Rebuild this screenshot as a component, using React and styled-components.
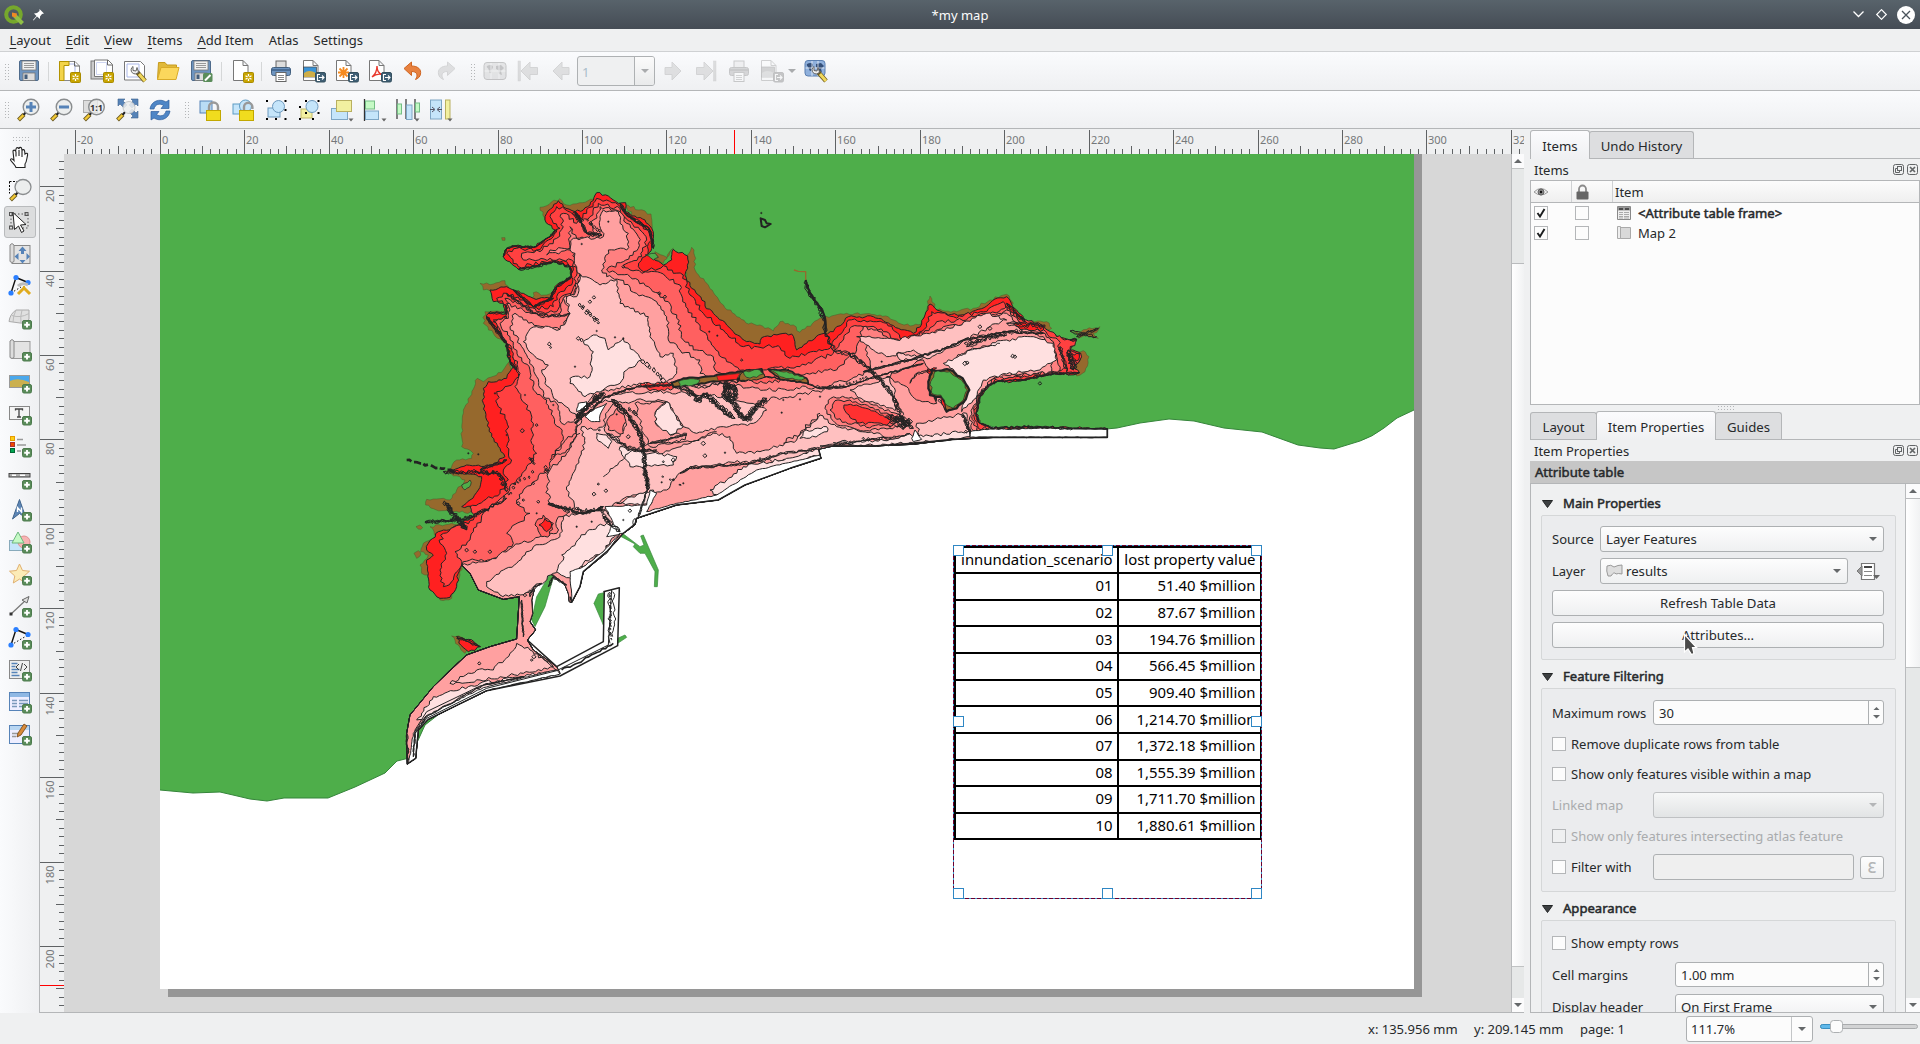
import React from "react";
import styled, { createGlobalStyle, css } from "styled-components";

const Global = createGlobalStyle`
  * { box-sizing: border-box; }
  body { margin: 0; overflow: hidden; background: #eff0f1; }
  svg { display: block; }
`;

/* ---------- window frame ---------- */
const Window = styled.div`
  width: 1920px; height: 1044px; display: flex; flex-direction: column; overflow: hidden;
  background: #eff0f1; color: #26292b; font: 13px/18px "Noto Sans", sans-serif; cursor: default;
`;
const TitleBar = styled.header`
  height: 29px; flex: none; display: grid; grid-template-columns: 1fr auto 1fr; align-items: center;
  background: linear-gradient(#58636b, #454c55); color: #fcfcfc;
`;
const TitleSide = styled.div`
  display: flex; align-items: center; gap: ${p => p.$gap}px; padding: 0 ${p => p.$pad}px;
  justify-content: ${p => (p.$end ? "flex-end" : "flex-start")};
`;
const MenuBar = styled.nav`
  height: 23px; flex: none; display: flex; align-items: center; padding-left: 9.5px; gap: 15px;
  border-bottom: 1px solid #cfd1d3;
`;
const MenuItem = styled.span`u { text-underline-offset: 3px; text-decoration-thickness: 1px; }`;
const ToolBar = styled.div`
  height: ${p => p.$h}px; flex: none; display: flex; align-items: center; padding-left: 4px;
  border-bottom: 1px solid #b4b6b8; background: linear-gradient(#fafbfd, #eff0f2);
`;
const Tool = styled.span`
  width: 33px; height: 30px; flex: none; display: grid; place-items: center; opacity: ${p => (p.$off ? 0.3 : 1)};
  filter: ${p => (p.$off ? "grayscale(1)" : "none")};
`;
const Sep = styled.span`width: 1px; height: 19px; background: #d5d7d8; margin: 0 ${p => p.$r ?? 3}px 0 ${p => p.$l ?? 3}px;`;
const Grip = styled.span`
  width: ${p => (p.$across ? 17 : 5)}px; height: ${p => (p.$across ? 5 : 17)}px; margin: ${p => p.$m || 0};
  flex: none; background: radial-gradient(circle, #b4b6b8 0.8px, transparent 1px) 0 0 / 3px 3px;
`;
const AtlasBox = styled.div`
  width: 78px; height: 30px; margin: 0 1px 0 0; display: flex; border: 1px solid #aeb1b3; border-radius: 3px;
  color: #a9bccb; background: #eff0f1; overflow: hidden; align-items: stretch;
`;
const AtlasValue = styled.span`flex: 1; padding: 6px 4px; border-right: 1px solid #aeb1b3;`;
const AtlasArrow = styled.span`width: 19px; display: grid; place-items: center; background: linear-gradient(#fbfbfb, #e9eaeb);`;
const ArrowSlot = styled.span`width: 11px; flex: none;`;
const Main = styled.main`height: 884px; flex: none; display: flex;`;
const SideBar = styled.aside`
  width: 40px; flex: none; border-right: 1px solid #b4b6b8; display: flex; flex-direction: column; align-items: center;
  background: linear-gradient(90deg, #fafbfd, #eff0f2); padding: 7px 0 0 1px;
`;
const SideTool = styled.span`
  width: 32px; height: 32px; display: grid; place-items: center; border-radius: 3px; border: 1px solid transparent; flex: none;
  ${p => p.$on && css`background: #dcddde; border-color: #b9bbbd;`}
`;
const Canvas = styled.section`width: 1484px; flex: none; display: flex; flex-direction: column; border-bottom: 1px solid #b4b6b8;`;
const CanvasRow = styled.div`display: flex; height: 858px;`;
const View = styled.div`position: relative; width: 1447px; height: 858px; background: #d7d7d7; overflow: hidden;`;

/* ---------- attribute table on the page ---------- */
const Frame = styled.div`
  position: absolute; left: 889.5px; top: 391.5px; width: 308px; border: 2px solid #000; border-bottom: 0;
  font: 14.9px/20px "Noto Sans", sans-serif; color: #000;
`;
const FrameRow = styled.div`
  display: grid; grid-template-columns: 163px 1fr; height: 26.64px; border-bottom: 2px solid #000;
`;
const FrameCell = styled.span`
  display: flex; justify-content: flex-end; align-items: center; padding: 0 4px 2px 0; white-space: nowrap; overflow: hidden;
  border-right: ${p => (p.$last ? 0 : 2)}px solid #000;
`;
const Overlay = styled.svg`position: absolute; left: 0; top: 0;`;

/* ---------- scrollbars ---------- */
const Bar = styled.div`width: ${p => p.$w}px; flex: none; display: flex; flex-direction: column; border-left: 1px solid #b9bbbd;`;
const BarEnd = styled.span`height: 14px; flex: none; display: grid; place-items: center; background: #fbfbfc;`;
const Track = styled.span`height: ${p => p.$h}px; background: #e6e8e8; border: solid #c0c2c3; border-width: 1px 0 0;`;
const Thumb = styled.span`flex: ${p => (p.$h ? "none" : 1)}; height: ${p => p.$h}px; background: linear-gradient(90deg, #fff, #f1f2f3); border-top: 1px solid #b9bbbd;`;

/* ---------- docks ---------- */
const Splitter = styled.div`width: 6px; flex: none; padding: 436px 0 0 2px;`;
const Dock = styled.aside`width: 390px; flex: none; display: flex; flex-direction: column; border-bottom: 1px solid #b4b6b8; overflow: hidden;`;
const Tabs = styled.div`
  height: 30px; flex: none; display: flex; align-items: flex-end; border-bottom: 1px solid #b4b6b8;
`;
const Tab = styled.span`
  width: ${p => p.$w}px; height: ${p => (p.$on ? 29 : 27)}px; margin-bottom: ${p => (p.$on ? -1 : 0)}px; text-align: center;
  padding-top: ${p => (p.$on ? 6 : 5)}px; border: 1px solid #b4b6b8; border-bottom: 0; border-radius: 3px 3px 0 0;
  margin-left: ${p => (p.$join ? -1 : 0)}px; font-size: 13.2px;
  background: ${p => (p.$on ? "linear-gradient(#fbfbfd,#eff0f2)" : "#dddee0")};
`;
const DockTitle = styled.div`height: ${p => p.$h}px; flex: none; display: flex; align-items: center; padding: 0 2px 0 4px; gap: 3px;`;
const Grow = styled.span`flex: 1;`;
const Tree = styled.div`height: 225px; flex: none; border: 1px solid #b4b6b8; background: #fcfcfc;`;
const TreeHead = styled.div`
  display: grid; grid-template-columns: 41px 41px 1fr; height: 22px; border-bottom: 1px solid #b4b6b8;
  background: linear-gradient(#fcfcfc, #efefef);
`;
const HeadCell = styled.span`padding-left: ${p => p.$p ?? 2}px; display: flex; align-items: center; border-right: ${p => (p.$last ? 0 : 1)}px solid #cfd1d3;`;
const TreeRow = styled.div`display: grid; grid-template-columns: 41px 42px 21px 1fr; height: 20px; align-items: center; padding: 0 0 1px 3px;`;
const Strong = styled.span`-webkit-text-stroke: 0.5px #26292b; font-size: 13.1px; padding-bottom: ${p => p.$pb || 0}px;`;
const Check = styled.span`
  width: 14px; height: 14px; flex: none; border: 1px solid #b4b6b8; display: grid; place-items: center;
  background: ${p => (p.$off ? "#eff0f1" : "#fcfcfc")};
`;
const HandleRow = styled.div`height: 5px; flex: none; display: flex; justify-content: center;`;
const Heading = styled.div`height: 22px; flex: none; background: #c6c6c6; padding: 2px 5px;`;
const Scroll = styled.div`flex: 1; min-height: 0; display: flex; border-top: 1px solid #b4b6b8; border-left: 1px solid #b4b6b8;`;
const Form = styled.div`width: 374px; flex: none; padding: 0 9px 0 10px; overflow: hidden;`;
const SectionTitle = styled.div`height: 22px; margin-top: ${p => p.$mt}px; display: flex; align-items: center; gap: 10px; padding-left: 1px;`;
const Group = styled.div`
  border: 1px solid #d5d7d8; border-radius: 2px; background: #ebecee; padding: ${p => p.$pt}px 11px 11px 10px; height: ${p => p.$h}px;
`;
const Line = styled.div`
  display: flex; align-items: center; height: ${p => p.$h || 26}px; margin-top: ${p => p.$mt || 0}px; gap: ${p => p.$gap || 0}px;
  color: ${p => (p.$off ? "#a9abad" : "inherit")};
`;
const Label = styled.span`width: ${p => p.$w}px; flex: none;`;
const face = css`border: 1px solid #adb0b2; border-radius: 3px; background: linear-gradient(#fdfdfd, #eff0f1);`;
const Combo = styled.span`
  ${face} height: 26px; width: ${p => (p.$w ? p.$w + "px" : "auto")}; flex: ${p => (p.$w ? "none" : 1)};
  display: flex; align-items: center; gap: 3px; padding: 0 6px 0 5px; font-size: 13.2px;
  ${p => p.$off && css`background: linear-gradient(#f6f7f7, #e2e4e5); border-color: #bfc1c3;`}
`;
const OverrideIcon = styled.svg`margin-left: 8px;`;
const Button = styled.span`${face} flex: 1; height: 26px; display: grid; place-items: center; font-size: 13.2px;`;
const Field = styled.span`
  flex: 1; height: ${p => p.$h || 25}px; border: 1px solid #adb0b2; border-radius: 3px; display: flex; align-items: center;
  padding-left: 5px; background: ${p => (p.$off ? "#efefef" : "#fcfcfc")};
`;
const Spin = styled.span`
  width: 15px; align-self: stretch; border-left: 1px solid #adb0b2; display: flex; flex-direction: column; align-items: center;
  justify-content: center; gap: 5px;
`;
const Small = styled.span`${face} width: 24px; height: 23px; margin-left: 6px; display: grid; place-items: center; color: #b3b5b6; font-size: 19px; line-height: 16px; padding-bottom: 3px;`;
const Pointer = styled.svg`position: absolute; left: 1683px; top: 633px;`;

const Status = styled.footer`height: 31px; flex: none; display: flex; align-items: center; padding-left: 1368px; padding-bottom: 1px; white-space: nowrap;`;
const Coord = styled.span`width: ${p => p.$w}px; flex: none; padding-top: 1px;`;
const Zoom = styled.span`
  width: 127px; height: 26px; margin-top: 1px; flex: none; border: 1px solid #adb0b2; border-radius: 3px; background: #fcfcfc; display: flex; align-items: stretch;
`;
const ZoomText = styled.span`flex: 1; padding: 3px 4px; border-right: 1px solid #c4c6c8;`;
const ZoomArrow = styled.span`width: 20px; display: grid; place-items: center;`;
const Slider = styled.svg`margin: 0 0 3px 7px;`;

/* ---------- small glyphs ---------- */
const Arrow = ({ up, c = "#65686a", w = 8 }) => (
  <svg width={w} height={w / 2} viewBox="0 0 8 4"><path d={up ? "M0 4L4 0L8 4Z" : "M0 0H8L4 4Z"} fill={c} /></svg>
);
const I = ({ children, s = 24 }) => <svg width={s} height={s} viewBox="0 0 24 24" fill="none">{children}</svg>;
const Star = () => (
  <g><rect x="13.500" y="13.500" width="10" height="10" rx="1" fill="#c9a500" stroke="#a98b00" />
    <path d="M18.500 15v7M15.500 16.700l6 3.600M15.500 20.300l6-3.600" stroke="#fff" strokeWidth="1.300" /><circle cx="18.500" cy="18.500" r="1.200" fill="#c9a500" /></g>
);
const Out = () => (
  <g><rect x="13.500" y="13.500" width="10" height="9.500" rx="1.500" fill="#3f5f75" stroke="#35505f" />
    <path d="M18 15.500h-2.500v6H18M17 18.500h5M20 16.500l2 2l-2 2" stroke="#fff" strokeWidth="1.100" /></g>
);
const Plus = () => (
  <g><rect x="14.500" y="14.500" width="9" height="8.500" rx="1.500" fill="#5a8c5a" stroke="#4c7a4c" />
    <path d="M19 16v5.500M16.200 18.700h5.600" stroke="#fff" strokeWidth="1.900" /></g>
);
const Floppy = () => (
  <g><rect x="2.500" y="1.500" width="19" height="20" rx="1.500" fill="#6d94c0" stroke="#4e6b8c" />
    <rect x="5" y="2" width="14" height="9" fill="#f0f0f0" stroke="#777" strokeWidth=".8" /><path d="M7 4.500h10M7 6.500h10M7 8.500h10" stroke="#999" />
    <rect x="6" y="14" width="12" height="7.500" fill="#ddd" stroke="#777" strokeWidth=".8" /><rect x="7.500" y="15.500" width="3" height="4.500" fill="#445e7c" /></g>
);
const Page = ({ x = 4, w = 15 }) => (
  <path d={`M${x + 0.5} 1.500H${x + w - 5}L${x + w} 6.500V21.500H${x + 0.5}ZM${x + w - 5} 1.500V6.500H${x + w}`} fill="#fff" stroke="#777" />
);
const Handle = () => (<g><path d="M2.500 22L8 16.500" stroke="#6c5a20" strokeWidth="4" /><path d="M3 21.500L8 16.500" stroke="#f3c935" strokeWidth="2.400" /><path d="M7.500 17L10 14" stroke="#222" strokeWidth="2" /></g>);
const Lens = ({ children }) => (<I><Handle /><circle cx="15" cy="9" r="7.800" fill="#eceeee" stroke="#8a8d8f" strokeWidth="1.400" />{children}</I>);
const Lock = ({ open }) => (
  <g><path d={open ? "M13 13V9a4.200 4.200 0 0 1 8.400 0V11" : "M11 14V9a4.500 4.500 0 0 1 9 0v5"} stroke="#999" strokeWidth="2.400" />
    <rect x="8.500" y="12.500" width="14" height="10" fill="#f0dc1e" stroke="#c2a800" /></g>
);
const Printer = () => (
  <g><rect x="7" y="2" width="10" height="7" fill="#ddd" stroke="#666" /><rect x="2.500" y="8.500" width="19" height="8" rx="2" fill="#6d94c0" stroke="#44617f" />
    <path d="M2 11h20" stroke="#3e5f86" strokeWidth="1.500" /><rect x="7" y="13.500" width="10" height="9" fill="#fff" stroke="#666" /><path d="M9 16.500h6M9 18.500h6M9 20.500h6" stroke="#888" /></g>
);
const Wrench = () => (<g><path d="M12 11l8 9" stroke="#6c5a20" strokeWidth="4.600" /><path d="M14 13l6 7" stroke="#f0d75a" strokeWidth="3" /><path d="M8 5.500a4 4 0 1 0 5.500 5.500l-1.500-4.500l-1 3.500l-3-.5z" fill="#eee" stroke="#666" /></g>);
const Dots = ({ pts }) => pts.map(([x, y]) => <rect key={x + "-" + y} x={x} y={y} width="2" height="2" fill="#000" />);
const Drop = () => <path d="M18.500 20.500h5l-2.500 3z" fill="#666" />;
const World = ({ c = "#8fb0dc" }) => (
  <g><rect x="1" y="3.500" width="20" height="15.500" rx="3" fill={c} stroke="#5b7fb0" /><path d="M3 7c3-2 6-1 6 1s-2 2-1.500 4s-2 3-2.500 0S2 9 3 7zM12 7l5-1l3 3l-3 3l1 3l-3-1l-1-3l-2-1z" fill="#35507a" /><path d="M1.500 11h19M8 4v15M14 4v15" stroke="#fff" strokeWidth=".7" /></g>
);

const icons = {
  save: <I><Floppy /></I>,
  newLayout: <I><g><path d="M2.500 2.500H18L22.500 7V21.500H2.500Z" fill="#fff" stroke="#888" /><path d="M10 5h8v12" stroke="#aab7e8" /><path d="M2.500 2.500H12V6.500H7V21.500H2.500Z" fill="#f3d44a" stroke="#b39300" /><path d="M17.500 2v5h5" stroke="#666" /></g><Star /></I>,
  dup: <I><rect x="1" y="2" width="16" height="18" fill="#ccc" stroke="#777" /><path d="M4.500 1H18l4.500 4.500V17.500H4.500Z" fill="#fff" stroke="#777" /><path d="M6.500 3.500h10v12h-10z" stroke="#cfd6f2" /><path d="M17.500 1v5h5" stroke="#666" /><Star /></I>,
  manager: <I><path d="M1.500 2.500H17.500L21.500 6.500V21H1.500Z" fill="#fff" stroke="#777" /><path d="M4 5h12v13H4z" stroke="#aab7e8" /><g transform="translate(2 2)"><Wrench /></g></I>,
  folder: <I><path d="M1.500 20.500L2.500 3.500H9L11 6H20.500V9" fill="#e0b93a" stroke="#c79b1d" /><path d="M1.500 20.500L5 8.500H23L20 20.500Z" fill="#fbd75c" stroke="#d9ab29" /></I>,
  saveAs: <I><Floppy /><rect x="14" y="14" width="9.500" height="9" rx="1.500" fill="#5a8c5a" /><path d="M16 21.500l5.500-5.500" stroke="#fff" strokeWidth="2" /></I>,
  newPage: <I><Page x={3} /><Star /></I>,
  print: <I><Printer /></I>,
  image: <I><Page x={1} /><rect x="1.500" y="8" width="13" height="10" fill="#3b93d6" stroke="#444" strokeWidth=".7" /><path d="M2 18v-4q5-4 12 0v4z" fill="#cfae48" /><Out /></I>,
  svg: <I><Page x={1} /><path d="M8.500 8v11M3 13.500h11M4.500 9.500l8 8M4.500 17.500l8-8" stroke="#f58a1f" strokeWidth="1.800" /><Out /></I>,
  pdf: <I><Page x={1} /><path d="M4 18q5-4 5-11q0 7 5 8.500q-5-1.500-10 2.500z" stroke="#e8382c" strokeWidth="1.400" /><Out /></I>,
  undo: <I><path d="M3 9.500L10.500 3V7C17 7 20.500 10.500 19.500 15C19 18 17 19.500 14.500 20.500C17.500 16 16 12.500 10.500 12.500V16.500Z" fill="#e8813f" stroke="#cf6420" /></I>,
  redo: <I><path d="M21 9.500L13.500 3V7C7 7 3.500 10.500 4.500 15C5 18 7 19.500 9.500 20.500C6.500 16 8 12.500 13.500 12.500V16.500Z" fill="#aaa" stroke="#888" /></I>,
  world: <I><rect x="1" y="3.500" width="22" height="17" rx="3" fill="#bbb" stroke="#555" /><path d="M4 7c3-2 6-1 6 1s-2 2-1.500 4s-2 4-2.500 0S3 9 4 7zM13 7l5-1l3 3l-3 3l1 4l-3-1l-1-4l-2-1z" fill="#555" /><path d="M1.500 12h21M8 4v16M16 4v16" stroke="#fff" strokeWidth=".7" /></I>,
  first: <I><rect x="2" y="2" width="2.500" height="20" fill="#9aa1a6" stroke="#888" strokeWidth=".5" /><path d="M5 12L14 3V8.500H21.500V15.500H14V21Z" fill="#a5adb3" stroke="#888" /></I>,
  prev: <I><path d="M4 12L13 3V8.500H20V15.500H13V21Z" fill="#a5adb3" stroke="#888" /></I>,
  next: <I><path d="M20 12L11 3V8.500H4V15.500H11V21Z" fill="#a5adb3" stroke="#888" /></I>,
  last: <I><rect x="19.500" y="2" width="2.500" height="20" fill="#9aa1a6" stroke="#888" strokeWidth=".5" /><path d="M19 12L10 3V8.500H2.500V15.500H10V21Z" fill="#a5adb3" stroke="#888" /></I>,
  atlasSet: <I><g transform="translate(0 -2)"><World /></g><g transform="translate(2 2)"><Wrench /></g></I>,
  zin: <Lens><path d="M15 4v10M10 9h10" stroke="#5683b8" strokeWidth="3" /></Lens>,
  zout: <Lens><path d="M10 9h10" stroke="#5683b8" strokeWidth="3" /></Lens>,
  z1: <I><rect x="1.500" y="2.500" width="14" height="12" fill="#ddd" stroke="#aaa" /><Handle /><circle cx="14.500" cy="9" r="7.800" fill="#eceeeecc" stroke="#8a8d8f" strokeWidth="1.400" /><text x="14.500" y="12.500" fontSize="9" fontWeight="bold" fill="#333" textAnchor="middle" fontFamily="Noto Sans, sans-serif">1:1</text></I>,
  zfull: <I><g fill="#5683b8" stroke="#3e638e" strokeWidth=".6"><path d="M3 1h7l-2 2l4 4l-3 3l-4-4l-2 2zM23 1v7l-2-2l-4 4l-3-3l4-4l-2-2zM23 20h-7l2-2l-4-4l3-3l4 4l2-2z" /></g><Handle /><circle cx="14" cy="9.500" r="6" fill="#eceeeedd" stroke="#bbb" strokeWidth=".8" /></I>,
  refresh: <I><g fill="#4f86c6" stroke="#2f5f9e" strokeWidth=".7"><path d="M2 11C3 3 12 0 18 4L21 2V10.500H13L15.500 7.500C12 5 7 6 6 11Z" /><path d="M22 13C21 21 12 24 6 20L3 22V13.500H11L8.500 16.500C12 19 17 18 18 13Z" /></g></I>,
  lock: <I><rect x="2" y="3" width="12" height="12" fill="#b9dcf5" stroke="#5683b8" /><Lock /></I>,
  unlock: <I><rect x="2" y="6" width="9" height="10" fill="#c5e5fa" stroke="#5d9bc4" /><circle cx="14.500" cy="8" r="6" fill="#c5e5fa" stroke="#5d9bc4" /><Lock open /></I>,
  group: <I><rect x="4" y="10" width="12" height="9" fill="#c5e5fa" stroke="#6d99bd" /><circle cx="14.500" cy="8.500" r="6" fill="#c5e5fa" stroke="#6d99bd" /><Dots pts={[[2, 2], [20.500, 2], [2, 20], [20.500, 20], [11, 20], [20.500, 11]]} /></I>,
  ungroup: <I><rect x="4" y="11" width="11" height="9" fill="#f2f0a0" stroke="#c2b96a" /><circle cx="15" cy="8.500" r="6" fill="#c5e5fa" stroke="#6d99bd" /><Dots pts={[[8, 2], [20.500, 2], [2, 8], [2, 20], [15, 20], [8, 14], [20.500, 14]]} /></I>,
  raise: <I><rect x="1.500" y="10.500" width="16" height="11" fill="#c5e5fa" stroke="#7ea6c4" /><rect x="6.500" y="2.500" width="15" height="11" fill="#f2f0a0" stroke="#b9b060" /><Drop /></I>,
  align: <I><path d="M1.500 1v22" stroke="#333" strokeWidth="1.300" /><rect x="2.500" y="3" width="9" height="8" fill="#c5fac5" stroke="#75bd86" /><rect x="2.500" y="13" width="13" height="8.500" fill="#c5e5fa" stroke="#7ea6c4" /><Drop /></I>,
  dist: <I><path d="M1 1v20M10 1v20M19 1v20" stroke="#333" strokeWidth="1.200" /><rect x="1.500" y="6" width="4" height="10" fill="#c5fac5" stroke="#75bd86" /><rect x="10.500" y="7" width="5.500" height="14.500" fill="#c5e5fa" stroke="#7ea6c4" /><rect x="19.500" y="5" width="4" height="9" fill="#c5fac5" stroke="#75bd86" /><Drop /></I>,
  resize: <I><rect x="1.500" y="2" width="11" height="19" fill="#c5e5fa" stroke="#7ea6c4" /><path d="M1 11.500h4M3 9l3 2.500l-3 2.500M13 11.500H9M11 9l-3 2.500l3 2.500" stroke="#556" /><rect x="16.500" y="2" width="4.500" height="19" fill="#f2f0a0" stroke="#b9b060" /><Drop /></I>,
};
const side = [
  <I><path d="M8 21.500c-1-3-4-5-5.500-7.500c0-1.500 1.500-2 3.500.5L5 5.500c0-1.800 2.200-1.800 2.600 0L8 3c.3-1.800 2.600-1.800 2.800 0L11 2.500c.5-1.600 2.500-1.400 2.700.3l.3 1.700c.6-1.400 2.400-1 2.600.5L17 8c1.500-1.400 3-.6 2.600 1c-.8 3-.8 7-2.600 9v3.500zM8 5.500v5M11 4v6M14 5v6" fill="#fff" stroke="#222" strokeWidth="1.100" /></I>,
  <I><path d="M1.500 3.500h8M1.500 3.500v12" stroke="#000" strokeDasharray="2 1.500" /><Handle /><ellipse cx="15" cy="9" rx="8" ry="7.500" fill="#eceeee" stroke="#8a8d8f" strokeWidth="1.300" /></I>,
  <I><path d="M3 4h17v14H3z" stroke="#555" strokeDasharray="1.500 2" /><rect x="1.500" y="2.500" width="3" height="3" stroke="#555" /><rect x="17" y="2.500" width="3" height="3" stroke="#555" /><rect x="1.500" y="16" width="3" height="3" stroke="#555" /><path d="M5 2.500L18 14.500L12.500 15L16 21L13.500 22.500L10.500 16L6.500 19.500Z" fill="#fff" stroke="#222" /></I>,
  <I><rect x="4" y="3.500" width="18" height="18" fill="#e3e3e3" stroke="#888" /><path d="M2 3q2-3 4 0v16.500q-2 2-4 0z" fill="#ddd" stroke="#888" /><g fill="#5683b8"><path d="M14.500 4.500l4 4.500h-2.500v3h-3V9h-2.500zM6.500 14.500l4-3.500v7zM22 14.500l-3.500-3.500v7zM14.500 21.500l-3-3.500h6z" /></g></I>,
  <I><path d="M3 19L8 3.500L20 8.500" stroke="#111" strokeWidth="1.400" /><path d="M3 19L13 13" stroke="#111" strokeDasharray="1.500 2" /><g fill="#2b7fff"><circle cx="3" cy="19" r="2.600" /><circle cx="8" cy="3.500" r="2.600" /><circle cx="20" cy="8.500" r="2.600" /></g><path d="M10 20l7-7M15 13l7 7" stroke="#e0ab1d" strokeWidth="3" /><path d="M10 12q4-4 10-1" stroke="#bbb" strokeWidth="3" /></I>,
  <I><path d="M1 15.500Q2 8 8 4H21V13Q19 18 12 17Z" fill="#e0e0e0" stroke="#aaa" /><path d="M4 9.500q8 3 17-2M8 4q-3 6-3 12M14 4q-2 7-1 13" stroke="#bbb" /><Plus /></I>,
  <I><rect x="4" y="3.500" width="18" height="17" fill="#e3e3e3" stroke="#999" /><path d="M2 3q2-3 4 0v16.500q-2 2-4 0z" fill="#ddd" stroke="#888" /><Plus /></I>,
  <I><rect x="1.500" y="5.500" width="20" height="12" fill="#4aa8ec" stroke="#999" /><path d="M2 17V11q8-4 19 1v5z" fill="#cbb04f" /><Plus /></I>,
  <I><rect x="1.500" y="4.500" width="20" height="13" fill="#f5f5f5" stroke="#888" /><path d="M7.500 8.500v-1.500h7v1.500M11 7v8M9 15h4" stroke="#444" strokeWidth="1.300" /><Plus /></I>,
  <I><rect x="2.500" y="2.500" width="4" height="4" fill="#fdd017" stroke="#e89b00" /><rect x="2.500" y="8.500" width="4" height="4" fill="#f04800" stroke="#a33" /><rect x="2.500" y="14.500" width="4" height="4" fill="#00a651" stroke="#063" /><path d="M9 5.500h6M9 11h9M9 17h4" stroke="#999" strokeWidth="1.500" /><Plus /></I>,
  <I><rect x="1" y="7.500" width="21" height="3.500" fill="#aaa" stroke="#444" /><path d="M4 9.200h4M12 9.200h5" stroke="#fff" strokeWidth="1.500" /><Plus /></I>,
  <I><path d="M11.500 1.500L18 20L11.500 15.500L4.500 21Z" fill="#5d86b6" stroke="#40648c" /><path d="M9.500 14V9.500l4 4.500V9.500" stroke="#fff" strokeWidth="1.400" /><Plus /></I>,
  <I><rect x="1.500" y="10.500" width="15" height="10" fill="#c5e5fa" stroke="#8ab" /><circle cx="16" cy="12" r="6" fill="#f7b3b3" stroke="#dd9090" /><path d="M10 2L16 13H4Z" fill="#c5fac5" stroke="#6db77d" /><Plus /></I>,
  <I><path d="M11.500 2l3 6.500l7 .7l-5.300 4.700l1.600 7l-6.300-3.800L5.300 21l1.500-7L1.500 9.200l7-.7z" fill="#fcebb6" stroke="#e0b070" /><Plus /></I>,
  <I><path d="M3 20L18 6" stroke="#777" strokeWidth="1.200" /><rect x="1.500" y="18.500" width="3" height="3" fill="#333" /><path d="M14 6L21 2.500L19 9Z" fill="#ddd" stroke="#666" /><Plus /></I>,
  <I><path d="M3 19L8 3.500L20 8.500" stroke="#111" strokeWidth="1.400" /><path d="M3 19L20 9" stroke="#111" strokeDasharray="1.500 2" /><g fill="#2b7fff"><circle cx="3" cy="19" r="2.600" /><circle cx="8" cy="3.500" r="2.600" /><circle cx="20" cy="8.500" r="2.600" /></g><Plus /></I>,
  <I><rect x="1.500" y="2.500" width="20" height="18" fill="#eee" stroke="#888" /><path d="M3.500 5.500h6M3.500 8.500h4M3.500 11.500h8M3.500 14.500h6M3.500 17.500h8" stroke="#5683b8" strokeWidth="1.500" /><path d="M11 6l-3 3l3 3M16 6l3 3l-3 3M14.500 5l-2 8" stroke="#444" /><Plus /></I>,
  <I><rect x="1.500" y="2.500" width="20" height="18" fill="#eef" stroke="#5683b8" /><rect x="2" y="3" width="19" height="4" fill="#8fb8e4" /><path d="M4 10.500h5M11 10.500h9M4 13.500h5M11 13.500h9M4 16.500h5M11 16.500h3" stroke="#7a98ba" strokeWidth="1.300" /><Plus /></I>,
  <I><rect x="1.500" y="3.500" width="20" height="18" fill="#eef" stroke="#5683b8" /><rect x="2" y="4" width="19" height="4" fill="#b8d6f2" /><path d="M4 11.500h6M4 14.500h4" stroke="#999" strokeWidth="1.300" /><path d="M9 15l1-4l6-9l3 2l-6 9z" fill="#d98b3a" stroke="#704010" strokeWidth=".8" /><Plus /></I>,
];

/* ---------- rulers ---------- */
const MM = 4.2222;
const range = (a, b, s) => Array.from({ length: Math.floor((b - a) / s) + 1 }, (_, i) => a + i * s);
const RulerText = styled.text`font: 11px "Noto Sans", sans-serif; fill: #75787a;`;
const HRuler = () => (
  <svg width="1484" height="25" viewBox="40 129 1484 25" shapeRendering="crispEdges">
    {range(-22, 322, 2).map(m => {
      const x = Math.floor(160.3 + m * MM) + 0.5;
      const big = m % 20 === 0;
      return <g key={m}><path d={`M${x} ${big ? 130 : m % 10 === 0 ? 146 : 149}V154`} stroke="#5f6264" />{big && <RulerText x={x + 1.5} y="144">{m}</RulerText>}</g>;
    })}
    <path d="M734.500 130V154" stroke="#f00" />
  </svg>
);
const VRuler = () => (
  <svg width="24" height="858" viewBox="40 154 24 858" shapeRendering="crispEdges">
    {range(14, 214, 2).map(m => {
      const y = Math.floor(102.2 + m * MM) + 0.5;
      const big = m % 20 === 0;
      return <g key={m}><path d={`M${big ? 40 : m % 10 === 0 ? 56 : 59} ${y}H64`} stroke="#5f6264" />
        {big && <RulerText transform={`translate(54 ${y + 3}) rotate(-90)`} textAnchor="end">{m}</RulerText>}</g>;
    })}
    <path d="M40 985.500H64" stroke="#f00" />
  </svg>
);

/* ---------- flood map ---------- */
const rng = seed => () => {
  seed = (seed * 1664525 + 1013904223) % 4294967296;
  return seed / 4294967296;
};
const parse = s => s.trim().split(/\s+/).map(p => p.split(",").map(Number));
const east = "2040,510 2060,508 2040,540 2072,550 2070,570 2050,590 2068,608 2035,615 1990,610 1900,630 1820,635 1795,645 1770,680 1758,730 1770,760 1810,775 1910,770 1980,772 2050,776";
const quay = "2152,777 2152,802 1990,802 1820,802 1690,808 1570,823 1450,828 1330,828";
const coast = "1285,838 1293,865 1200,895 1065,945 985,990 860,1005 740,1045 735,1065 700,1090 650,1145 635,1160 580,1205 570,1250 545,1297 538,1295 535,1270 525,1245 490,1215 465,1210 450,1225 455,1240 435,1250 425,1290 428,1330 420,1355 437,1380 412,1410 430,1440 500,1490 510,1510 290,1562 115,1648 85,1680 77,1765 52,1782 50,1690 60,1635 130,1550 180,1500 230,1455 300,1430 380,1407 388,1280 340,1288 265,1260 240,1210 215,1185";
const stiff = new Set((quay + " " + coast).split(" "));
/* Breaks each edge into short crooked steps, as a surveyed contour has; the shoreline shared by all levels stays put. */
const rough = (s, amp = 4, seed = 1, closed = true, step = 9) => {
  const pts = parse(s), r = rng(seed), out = [];
  const n = pts.length;
  for (let i = 0; i < (closed ? n : n - 1); i++) {
    const [x1, y1] = pts[i], [x2, y2] = pts[(i + 1) % n];
    const fixed = stiff.has(`${x1},${y1}`) && stiff.has(`${x2},${y2}`);
    const len = Math.hypot(x2 - x1, y2 - y1), k = fixed ? 1 : Math.max(1, Math.round(len / step));
    for (let j = 0; j < k; j++) {
      const t = j / k, a = (r() - 0.5) * 2 * amp * (j ? 1 : 0);
      out.push([x1 + (x2 - x1) * t - ((y2 - y1) / (len || 1)) * a, y1 + (y2 - y1) * t + ((x2 - x1) / (len || 1)) * a]);
    }
  }
  if (!closed) out.push(pts[n - 1]);
  return "M" + out.map(p => p[0].toFixed(1) + " " + p[1].toFixed(1)).join("L") + (closed ? "Z" : "");
};
/* Small irregular rings strung along a line. */
const beads = (s, size, spread, seed, gap = 9) => {
  const pts = parse(s), r = rng(seed), out = [];
  for (let i = 0; i < pts.length - 1; i++) {
    const [x1, y1] = pts[i], [x2, y2] = pts[i + 1];
    const k = Math.max(1, Math.round(Math.hypot(x2 - x1, y2 - y1) / gap));
    for (let j = 0; j < k; j++) {
      const x = x1 + ((x2 - x1) * j) / k + (r() - 0.5) * spread, y = y1 + ((y2 - y1) * j) / k + (r() - 0.5) * spread;
      const a = size * (0.5 + r() * 0.7), b = size * (0.5 + r() * 0.7);
      out.push(`M${(x - a).toFixed(1)} ${y.toFixed(1)}L${x.toFixed(1)} ${(y - b).toFixed(1)}L${(x + a).toFixed(1)} ${(y + 1).toFixed(1)}L${(x + 1).toFixed(1)} ${(y + b).toFixed(1)}Z`);
    }
  }
  return out.join("");
};
const brown = [
  "885,265 905,232 912,240 915,300 945,335 975,375 1000,405 1040,440 1075,462 1110,465 1150,483 1170,455 1210,465 1230,487 1290,445 1370,430 1420,432 1470,435 1510,450 1560,468 1595,460 1610,420 1620,378 1640,420 1700,425 1750,415 1800,390 1850,373 1870,400 1800,430 1600,500 1350,560 1200,560 1000,500 890,340",
  "358,575 340,600 280,635 262,625 240,680 220,720 215,800 215,830 250,850 245,865 200,870 180,900 165,905 225,930 200,960 180,990 140,987 110,988 107,1005 155,1022 260,1030 330,960 400,800 380,640",
  "270,340 310,342 345,332 355,360 300,362 280,360", "450,112 510,86 530,105 578,98 610,88 600,130 500,140 465,150", "700,98 745,120 783,132 790,190 760,180",
  "430,368 470,375 500,355 490,390 430,395", "285,425 280,460 310,490 345,520 320,450 340,425", "820,280 850,235 830,262 795,245 790,265",
  "185,1060 120,1070 140,1100 100,1120 92,1145 115,1155 90,1185 95,1210 115,1215 125,1250 150,1290 185,1285 210,1215 250,1060",
  "78,1070 90,1065 98,1073 85,1077", "72,1150 85,1142 92,1155 80,1165", "335,203 345,203 345,211 337,211", "185,1398 215,1402 245,1420 225,1450 205,1425", "1890,455 1970,455 1985,475 1960,480", "2060,545 2080,542 2097,560 2085,605 2060,618 2050,600",
  "2040,482 2065,490 2090,478 2130,470 2125,480 2110,490 2125,505 2080,498 2065,505 2070,495",
];
const levels = [
  ["#ff2020", `505,92 528,115 555,125 580,120 600,105 620,68 655,78 685,100 707,98 705,125 735,138 765,150 785,175 790,205 785,235 772,255 820,285 845,270 850,238 893,258 893,295 885,315 905,355 925,375 945,395 945,408 970,430 1010,465 1035,492 1070,515 1110,522 1115,503 1170,492 1205,492 1220,540 1250,520 1285,495 1330,485 1375,440 1400,442 1450,440 1480,452 1525,475 1570,490 1595,462 1605,435 1620,402 1650,423 1675,435 1740,430 1790,408 1815,387 1850,380 1880,420 1900,440 1900,455 1965,465 1965,482 1950,485 2000,498 ${east} ${quay} ${coast} 205,1210 200,1250 180,1282 150,1285 120,1260 115,1210 110,1170 130,1155 110,1140 115,1120 145,1085 185,1075 250,1040 280,1015 215,1010 240,990 265,960 275,920 180,905 230,885 300,888 345,860 330,835 305,800 290,750 280,700 280,655 295,635 320,635 350,625 370,590 355,565 350,520 330,500 305,465 290,445 295,430 350,430 340,400 310,395 305,375 300,360 350,350 370,360 400,370 430,385 480,385 495,350 545,320 540,290 510,280 490,275 385,298 340,260 350,235 375,228 430,232 480,200 495,180 465,150 470,130`],
  ["#ff4040", `500,110 525,118 560,150 590,130 620,85 650,90 690,110 700,125 760,165 780,200 775,240 745,290 760,305 830,290 850,310 880,315 900,375 940,430 1000,480 1060,530 1110,532 1165,527 1200,565 1280,545 1320,535 1375,450 1450,455 1490,460 1530,505 1570,495 1610,470 1625,425 1690,440 1790,425 1840,395 1880,440 1960,470 2000,500 ${east} ${quay} ${coast} 190,1230 160,1250 150,1200 170,1150 150,1120 160,1090 250,1050 240,1010 330,970 355,930 340,900 365,870 350,830 355,800 345,745 325,710 320,665 345,650 370,640 385,610 375,570 355,520 310,450 350,440 350,405 320,385 350,370 390,390 430,415 490,410 500,380 545,345 550,300 530,275 500,272 385,290 350,250 380,235 440,240 490,200 510,175 490,160 480,140`],
  ["#ff6060", `520,130 560,160 600,140 625,100 690,115 700,140 750,180 770,210 755,260 700,285 720,300 820,312 870,345 878,395 925,460 965,525 1010,575 1060,600 1120,600 1230,590 1330,550 1385,470 1440,470 1480,485 1530,515 1600,490 1640,455 1700,450 1800,430 1850,410 1880,450 1950,480 2005,510 2010,545 2030,595 1990,607 1815,628 1765,680 1752,740 1765,775 2050,785 ${quay} ${coast} 195,1145 240,1110 250,1085 300,1010 345,975 380,930 410,890 440,850 425,820 430,760 405,700 375,650 390,610 370,550 330,480 310,455 350,445 355,410 345,385 395,400 440,425 500,425 510,385 548,360 560,300 545,270 480,265 400,270 395,250 450,245 500,205 520,170 510,140`],
  ["#ff8080", `540,170 560,205 610,200 605,165 630,110 690,125 710,160 745,200 745,235 700,275 650,300 720,320 775,350 835,395 860,445 880,510 920,540 970,560 975,600 1040,625 1130,640 1250,610 1340,600 1400,540 1420,470 1460,480 1500,510 1550,520 1620,500 1660,470 1740,460 1800,440 1850,420 1890,460 1950,485 1990,515 2000,560 2010,600 1815,625 1762,680 1745,740 1760,780 2050,785 ${quay} ${coast} 220,1175 310,1165 370,1120 350,1090 420,1030 380,1000 400,960 480,890 520,800 490,740 470,690 430,660 420,600 385,560 360,500 330,460 355,445 360,420 350,400 400,420 450,440 510,430 520,385 552,370 570,310 560,280 550,240 470,255 480,240 540,235`],
  ["#ffa0a0", `550,205 575,205 640,200 630,140 640,120 685,125 690,160 715,190 710,240 655,240 635,300 650,320 690,330 740,370 800,395 830,450 835,510 870,540 930,570 930,610 1000,640 1130,660 1300,650 1400,620 1440,600 1430,530 1450,510 1520,520 1560,540 1640,520 1700,480 1780,450 1850,430 1900,470 1960,500 1985,560 1985,605 1815,622 1760,680 1740,740 1750,782 2050,785 ${quay} ${coast} 300,1170 370,1130 430,1110 500,1090 500,1050 540,1025 480,1000 470,950 480,900 530,850 560,800 560,760 515,760 500,700 460,680 440,620 420,570 395,530 360,470 375,430 400,450 460,470 510,480 545,430 520,385 552,375 575,330 560,290 555,250 540,240`],
];
const WHITE = "#ffffff";
const blobs = [
  ["#ff2020", "200,1405 235,1408 272,1430 235,1445 212,1425"], ["#ff4040", "750,640 845,636 850,655 780,662"], ["#ff2020", "1578,608 1640,594 1618,618 1612,640 1590,622"],
  ["#ff2020", "1870,462 1905,455 1962,468 1960,480 1900,478"], ["#ff2020", "2045,550 2068,552 2066,570 2046,572"],
  ["#ffc0c0", "570,315 630,345 680,328 690,400 745,425 775,440 780,500 810,560 850,550 860,610 830,635 740,645 620,665 560,740 500,690 465,640 455,600 475,585 440,565 400,515 415,485 440,470 510,478 540,430 530,380 560,380"],
  ["#ffc0c0", "575,770 620,780 650,755 680,800 720,840 820,850 900,820 980,790 1020,800 1040,850 1110,845 1220,810 1290,735 1340,770 1400,780 1470,790 1490,805 1300,828 1200,870 1060,875 900,890 850,930 830,960 720,980 640,1020 560,1020 530,960 545,920 570,860 585,820"],
  ["#ffc0c0", "290,1235 340,1200 380,1180 430,1130 510,1100 520,1040 640,1020 680,1060 650,1130 580,1190 490,1210 440,1250 390,1275 330,1275 290,1250"],
  ["#ffc0c0", "380,1420 420,1440 490,1490 400,1510 270,1530 180,1540 260,1500 310,1500 360,1450"],
  ["#ffc0c0", "620,690 700,670 830,665 1000,680 1080,700 1130,720 1090,760 1000,770 920,790 880,770 850,725 830,695 760,690 680,700"],
  ["#ffa0a0", "640,750 670,700 700,740 710,765 690,800 650,790"], ["#ff8080", "655,745 680,715 705,745 700,790 655,780"], ["#ffa0a0", "735,700 830,695 800,720 795,755 840,795 890,790 885,810 780,830 760,790"],
  ["#ffc0c0", "1380,660 1500,620 1520,690 1515,722 1420,690"], ["#ffc0c0", "1400,500 1520,510 1680,475 1790,430 1850,450 1800,470 1730,510 1620,565 1530,570 1520,550 1600,560 1570,540 1490,560 1450,540"],
  ["#ff8080", "1490,620 1600,570 1625,630 1640,700 1580,690 1550,650"], ["#ffc0c0", "1580,760 1680,740 1730,730 1740,790 1590,805"],
  ["#ff8080", "1305,715 1322,685 1385,682 1450,705 1530,735 1525,770 1430,782 1335,758"], ["#ff6060", "1320,720 1335,692 1380,690 1440,712 1515,742 1510,765 1430,772 1340,748"], ["#ff3030", "1362,705 1400,705 1470,735 1510,745 1490,765 1400,758 1370,730"],
  ["#ff6060", "435,1065 460,1035 490,1060 480,1095 455,1100"], ["#ff2020", "447,1065 465,1045 485,1065 470,1085"],
  ["#ffe0e0", "580,515 610,495 645,505 655,540 700,505 755,570 710,600 690,640 620,665 585,680 540,640 540,625 600,620 610,545"],
  ["#ffe0e0", "830,695 850,725 880,770 840,795 795,755 800,720"], ["#ffe0e0", "1660,580 1740,540 1850,510 1930,500 1990,520 2000,570 1950,600 1850,612 1780,630 1750,690 1715,725 1730,660 1700,610"],
  ["#ffe0e0", "500,1205 520,1170 515,1155 545,1130 590,1085 650,1060 685,1085 640,1145 580,1180 545,1230"], ["#ffe0e0", "680,1000 760,970 790,960 780,1005"],
  ["#ffe0e0", "620,790 650,795 665,815 655,835 620,805"], ["#ffe0e0", "690,830 740,845 860,860 850,885 720,890 700,860"],
  ["#ffe0e0", "960,960 1010,930 1060,890 1190,865 1285,838 1290,855 1200,885 1065,935 985,980"],
  ["#ffe0e0", "80,1650 130,1580 270,1540 420,1515 500,1500 490,1515 290,1555 100,1650"], ["#ffe0e0", "1240,785 1310,770 1312,785 1250,805 1230,805"],
  ["#ffe0e0", "1330,818 1500,808 1560,792 1600,800 1740,782 1740,800 1570,819 1450,826"],
  [WHITE, "645,1010 770,1005 780,960 800,970 770,1025 860,1000 980,975 1060,925 1100,900 1290,855 1293,865 1200,895 1065,945 985,990 860,1005 740,1045 735,1065 700,1090 650,1100 670,1060"],
  [WHITE, "1740,785 1800,777 1850,778 1980,774 2152,777 2152,802 1740,802"], [WHITE, "585,740 600,725 650,700 630,735 630,755 605,755"], [WHITE, "565,700 590,695 590,715 560,725"],
  [WHITE, "1565,805 1575,780 1595,808 1570,815"], [WHITE, "540,1205 580,1190 640,1145 690,1090 650,1150 580,1205 570,1250 545,1297"],
  [WHITE, "510,1512 290,1562 115,1648 85,1680 77,1765 52,1782 62,1750 70,1690 108,1638 280,1553 500,1500"],
];
const strands = [
  ["1247,330 1255,370 1285,405 1305,455 1305,490 1335,545 1380,550 1430,590 1475,635 1510,680 1540,750 1570,775", 8, 3],
  ["665,688 710,730 745,780 760,830 765,900 775,960", 8, 4], ["745,1040 772,960 768,900", 3, 3],
  ["555,760 590,730 650,680 740,650 845,645", 4, 4], ["560,745 600,700 640,670", 8, 6], ["1020,645 1010,690 1040,700 1045,730 1070,750 1095,710 1130,685", 10, 4],
  ["1000,650 1040,655 1035,690 1010,680 1000,650", 9, 4], ["850,650 900,660 920,695 940,670 975,700 1010,735 1035,745", 8, 4],
  ["160,905 220,905 260,905 320,910 345,935 350,965", 8, 3], ["105,1055 170,1053 250,1040 300,1010 350,985", 6, 3], ["165,1000 190,1030 230,1080", 9, 4],
  ["475,1000 520,1015 570,1030 620,1020 640,1010", 5, 5], ["640,1040 690,1085", 7, 4], ["1040,630 1130,620 1240,637 1290,655 1370,650 1440,625 1600,580", 3, 3],
  ["1420,605 1560,570 1680,530 1720,510 1850,485 1960,490", 4, 4], ["1730,530 1800,500 1850,495", 7, 3], ["1850,460 1960,470", 8, 3], ["2040,483 2120,500", 6, 2], ["2060,500 2125,475", 5, 3],
  ["1515,740 1560,765", 14, 4], ["1720,735 1740,790", 5, 4],
  ["385,298 440,290 490,275 540,290 545,320", 5, 3], ["340,260 350,235 375,228 430,232 480,200 500,178", 4, 3], ["295,430 350,430 345,405", 6, 2], ["290,440 350,520 360,575 380,600", 5, 5],
  ["555,125 575,160 590,190 635,195", 6, 6], ["690,100 705,130 780,180 790,235", 5, 5], ["480,385 500,350 545,320", 5, 5], ["370,360 430,410 490,385", 5, 5],
  ["350,370 430,430 500,440 540,430", 5, 3], ["1850,400 1880,430 1905,455", 6, 4], ["2068,608 1990,612 1900,630 1820,635 1795,645 1770,680 1758,730 1770,760 1810,775 1910,770 2050,776", 4, 3],
  ["2040,510 2060,508", 4, 3], ["2035,540 2050,600", 10, 6], ["2010,530 2030,605", 7, 3], ["215,1185 240,1210 265,1260 340,1288 388,1280 380,1407 300,1430 230,1455 130,1550 60,1635 50,1690 55,1770", 4, 3],
  ["420,1355 437,1380 412,1410 430,1440", 8, 4], ["475,1250 490,1220 530,1245", 5, 3], ["735,1045 730,1065", 7, 2], ["420,1280 432,1250 455,1240", 5, 3], ["395,1290 400,1400", 3, 3],
  ["640,920 720,845 780,820 900,815 980,785", 4, 1], ["780,820 890,795", 4, 3], ["870,910 900,895 1080,880 1180,850 1280,835", 4, 3], ["270,900 350,870", 5, 4], ["845,640 935,650 1120,620", 7, 2], ["200,1400 270,1430", 5, 3],
  ["480,870 520,820 560,780 585,730", 7, 1], ["490,860 530,840 570,790", 6, 1], ["650,790 690,820 740,840 800,840", 6, 3], ["1120,690 1200,680 1300,660 1370,650", 6, 1], ["1290,730 1240,780 1180,820", 7, 1],
  ["1330,828 1400,815 1520,800 1560,790", 4, 2], ["70,1760 75,1690 110,1640 280,1545 400,1520", 3, 2], ["1625,600 1580,610 1560,640", 5, 2], ["1700,560 1740,540 1830,520", 4, 1],
];
const rings = [
  ["675,695 710,730 745,780 760,830 765,900 775,960", 6, 6, 8], ["1380,550 1430,590 1475,635 1510,680 1530,730", 5, 8, 9], ["1500,740 1530,770 1560,760 1525,735 1510,765", 9, 14, 7],
  ["1010,640 1000,680 1030,700 1045,730 1075,750 1095,715 1130,688", 7, 6, 6], ["1005,645 1035,650 1035,680 1010,670", 7, 5, 6], ["895,660 925,690 950,672 985,705 1030,740", 7, 10, 7],
  ["560,750 600,700 640,665", 7, 16, 7], ["760,575 830,640", 7, 6, 14], ["720,715 740,735", 6, 10, 6], ["260,905 320,910 350,960", 5, 8, 8], ["165,1000 190,1040 230,1080", 7, 8, 7],
  ["110,1057 220,1050 300,1015", 4, 6, 8], ["635,1015 650,1060", 6, 8, 8], ["480,1003 600,1025 640,1015", 5, 6, 12], ["1720,735 1735,790", 5, 10, 9], ["660,1270 662,1415", 3, 5, 9],
  ["345,980 430,900", 4, 14, 12], ["555,130 640,190", 5, 12, 10], ["2040,555 2060,600", 6, 10, 9], ["1730,520 1850,490 1900,480", 5, 8, 9], ["570,405 630,460", 5, 6, 13], ["420,865 435,882", 5, 5, 5], ["468,892 472,910", 6, 6, 6],
  ["1620,650 1640,690 1665,705", 4, 6, 8], ["1290,655 1360,645 1440,620", 3, 4, 10], ["1195,600 1185,610", 3, 3, 6], ["820,920 880,945", 3, 12, 16],
];
const green = [
  "1635,605 1680,605 1715,630 1732,660 1720,690 1700,705 1690,715 1665,700 1652,675 1625,670 1622,635", "865,635 900,626 930,630 920,642 870,650",
  "1060,605 1110,600 1120,612 1100,622 1070,622", "1140,600 1190,605 1245,625 1235,630 1170,620", "765,255 795,250 805,262 790,270", "215,945 240,930 242,945 225,960",
];
const specks = [[1114, 129], [575, 222], [490, 705], [405, 675], [315, 670], [958, 485], [982, 497], [700, 505], [675, 502], [620, 483], [555, 590], [680, 733], [1455, 608], [1500, 770], [1475, 575], [350, 795], [265, 853], [235, 850], [215, 910], [1290, 680], [1230, 688], [1180, 690], [1175, 728], [815, 937], [850, 930], [880, 940], [1005, 848], [560, 1070], [605, 1055], [700, 1050], [440, 1030], [1110, 865], [1140, 858], [1915, 768], [655, 155]];
const loops = "560,1015;580,410;600,395;612,382;590,428;602,436;615,450;625,458;478,522;482,532;565,505;575,510;397,782;400,990;385,1000;445,995;808,370;825,380;700,290;940,820;945,857;850,870;820,875;715,800;628,780;440,765;1055,570;1770,470;1800,475;1868,558;1875,560;1725,580;1732,578;625,942;648,962;612,972;720,1022;268,1480;425,1470;432,1460;300,1145;255,1145;230,1140;420,1265;405,1275;1420,805;1435,808;1950,640;430,940".split(";").map(p => p.split(",").map(Number));

const FloodMap = () => {
  const r = rng(77);
  return (
    <svg width="1447" height="858" viewBox="64 154 1447 858">
      <defs><clipPath id="page"><rect x="160" y="100" width="1254" height="889" /></clipPath></defs>
      <rect x="168" y="110" width="1254" height="887" fill="#969696" />
      <rect x="160" y="100" width="1254" height="889" fill="#fff" />
      <g clipPath="url(#page)" strokeLinejoin="round">
        <path d="M150 100H1430V404L1414 410L1397 418L1384 428Q1372 437 1360 441L1334 449L1320 448L1298 445L1262 432L1224 428L1194 421L1169 419L1140 423L1117 428L1106 429L1000 428L960 420L850 430L700 470L560 560L530 570L525 640L515 655L470 690L425 725L410 758L405 759L397 761L385 773L355 787L328 798L300 798L284 798L267 801L250 799L233 795L220 792L193 793L160 790H150Z" fill="#4eae4a" stroke="#35853a" strokeWidth="1" />
        <g transform="translate(390 170) scale(.33333)" stroke="#232323" strokeWidth="3" fill="none">
          <path d="M430 1365L400 1400L400 1420L495 1500L683 1427L688 1253L643 1265L640 1415L500 1490L412 1410Z" fill="#fff" stroke="none" />
          <g fill="#4eae4a" stroke="#35853a" strokeWidth="2">
            <path d="M480 1212L492 1215L465 1310L435 1370L425 1350L440 1280Z" /><path d="M625 1272L642 1268L640 1365L612 1300Z" />
            <path d="M685 1085L700 1092L750 1130L762 1125L752 1098L760 1095L805 1200L802 1250L793 1250L795 1205L765 1150L750 1150L730 1130L735 1122L690 1098Z" />
            <path d="M683 1405L705 1395L710 1402L683 1420Z" />
          </g>
          {brown.map((b, i) => <path key={i} d={rough(b, 4, i + 3)} fill="#96692d" stroke="#4d5a2a" strokeWidth="1.500" />)}
          <path d="M1212 300L1225 304L1247 305L1247 332" stroke="#96692d" strokeWidth="4" />
          {levels.map(([c, p], i) => <path key={i} d={rough(p, i ? 6 : 3.500, i * 13 + 5)} fill={c} />)}
          {blobs.map(([c, p], i) => <path key={i} d={rough(p, c === WHITE ? 1.500 : 5, i * 7 + 2)} fill={c} />)}
          {strands.map(([p, a, n], i) => range(0, n - 1, 1).map(k => <path key={i + "-" + k} d={rough(p, a, i * 31 + k * 17 + 1, false, 8)} />))}
          {rings.map(([p, s, w, g], i) => <path key={i} d={beads(p, s, w, i * 11 + 3, g)} />)}
          <path d={rough("50,870 75,876 90,880 130,890 170,900 200,905", 3, 9, false)} strokeWidth="8" strokeDasharray="16 9 22 7" />
          <g fill="#96692d"><path d={rough("845,638 880,625 935,622 1000,612 1115,597 1122,618 1050,625 935,640 850,650", 2, 4)} strokeWidth="6" /><path d={rough("1050,615 1070,600 1110,598 1125,620 1100,630 1050,632", 2, 8)} /><path d={rough("1135,598 1190,600 1250,625 1255,640 1170,628", 2, 5)} strokeWidth="5" />
            <path d={rough("1625,600 1680,600 1718,625 1738,660 1722,695 1700,715 1670,725 1655,680 1620,675 1615,635", 3, 6)} strokeWidth="7" /></g>
          <path d="M980 618L1050 610L1040 628L985 632Z" fill="#f22" strokeWidth="1.500" />
          <path d="M1652 678L1664 700L1668 722L1655 700Z" fill="#f22" />
          {green.map((g, i) => <path key={i} d={rough(g, 3, i + 20)} fill="#4eae4a" strokeWidth="2" />)}
          {/* sea wall and coast */}
          <path d="M1285 835L1293 865L1200 895L1065 945L985 990L860 1005L740 1045L735 1062L700 1090L650 1145L580 1205L570 1250L545 1297L540 1280" strokeWidth="4.500" />
          <path d="M1290 828L1450 828L1570 820L1690 808L1790 802H2152V777L2050 776" strokeWidth="5" />
          <path d="M640 1265L688 1253L683 1427L510 1518L290 1562L115 1648L85 1680L77 1765L52 1782V1760M643 1265L640 1415L500 1490L412 1410" strokeWidth="4.500" />
          <path d="M430 1440L500 1502L655 1425L665 1260M95 1665L110 1645L290 1555L500 1502M70 1760L75 1680L110 1625L270 1548L400 1520" />
          <path d={rough("655,1270 660,1320 655,1400 660,1420", 6, 5, false)} /><path d={rough("668,1265 675,1320 668,1400", 5, 8, false)} /><path d={rough("515,1500 580,1470 670,1420", 3, 8, false)} strokeWidth="5" />
          <path d="M1247 330Q1255 370 1285 405T1305 490" strokeWidth="6" />
          <path d="M1112 145L1125 150L1130 160L1142 162L1125 172L1115 168Z" strokeWidth="6" />
          {specks.map(([x, y], i) => <circle key={i} cx={x} cy={y} r="2.500" fill="#232323" strokeWidth="1" />)}
          {loops.map(([x, y], i) => { const a = 3 + r() * 4; return <path key={i} d={rough(`${x - a},${y} ${x},${y - a} ${x + a},${y + 1} ${x - 1},${y + a}`, 2, i + 1)} />; })}
        </g>
      </g>
    </svg>
  );
};

const rows = [["01", "51.40"], ["02", "87.67"], ["03", "194.76"], ["04", "566.45"], ["05", "909.40"], ["06", "1,214.70"], ["07", "1,372.18"], ["08", "1,555.39"], ["09", "1,711.70"], ["10", "1,880.61"]];

const TickMark = () => <svg width="10" height="10" viewBox="0 0 10 10"><path d="M1.500 5L4 8.500L8.500 1" fill="none" stroke="#1b1d1e" strokeWidth="1.900" /></svg>;
const DockButtons = () => (
  <>
    <svg width="11" height="11" viewBox="0 0 11 11" fill="none" stroke="#626567"><rect x=".5" y=".5" width="10" height="10" rx="2" /><rect x="4.500" y="2.500" width="4" height="4" /><path d="M4 4.500H2.500V8.500H6.500V7" /></svg>
    <svg width="11" height="11" viewBox="0 0 11 11" fill="none" stroke="#626567"><rect x=".5" y=".5" width="10" height="10" rx="2" /><path d="M3 3l5 5M8 3l-5 5" strokeWidth="1.700" /></svg>
  </>
);
const Section = ({ title, mt }) => (
  <SectionTitle $mt={mt}><svg width="11" height="8" viewBox="0 0 11 8"><path d="M.5 .5H10.500L5.500 7.500Z" fill="#3d4042" stroke="#232627" /></svg><Strong $pb={2}>{title}</Strong></SectionTitle>
);
const CheckLine = ({ text, mt, off, h = 18 }) => <Line $h={h} $mt={mt} $off={off} $gap={5}><Check $off={off} /><span>{text}</span></Line>;
const Stepper = () => <Spin><Arrow up w={7} /><Arrow w={7} /></Spin>;
const T = ({ n, off }) => <Tool $off={off}>{icons[n]}</Tool>;

export default function App() {
  return (
    <>
      <Global />
      <Window>
        <TitleBar>
          <TitleSide $gap={9} $pad={4}>
            <svg width="20" height="20" viewBox="0 0 20 20" fill="none"><circle cx="9.500" cy="9.500" r="7.300" stroke="#76a82c" strokeWidth="4" /><path d="M10.500 10.500L18.500 18.500" stroke="#8fbf45" strokeWidth="4" /><path d="M8 7.500l5 1l-1 4l-4-1z" fill="#f08a24" /></svg>
            <svg width="11" height="12" viewBox="0 0 11 12" fill="#fff"><path d="M6.500 0L11 4.500L9 5L7 7.500L7 10L4 7.500L.5 11.500L0 11L3.500 7L1 4.500L4 4L6.500 2Z" /></svg>
          </TitleSide>
          <span>*my map</span>
          <TitleSide $gap={9} $pad={5} $end>
            <svg width="15" height="7" viewBox="-2 0 15 7" fill="none" stroke="#fff" strokeWidth="1.300"><path d="M.5 .5L5.500 5.500L10.500 .5" /></svg>
            <svg width="13" height="11" viewBox="-1 0 13 11" fill="none" stroke="#fff" strokeWidth="1.200"><path d="M5.500 .7L10.300 5.500L5.500 10.300L.7 5.500Z" /></svg>
            <svg width="18" height="18" viewBox="0 0 18 18"><circle cx="9" cy="9" r="9" fill="#fff" /><path d="M5 5l8 8M13 5l-8 8" stroke="#4a535b" strokeWidth="1.300" /></svg>
          </TitleSide>
        </TitleBar>
        <MenuBar>
          <MenuItem><u>L</u>ayout</MenuItem><MenuItem><u>E</u>dit</MenuItem><MenuItem><u>V</u>iew</MenuItem><MenuItem><u>I</u>tems</MenuItem>
          <MenuItem><u>A</u>dd Item</MenuItem><MenuItem>Atlas</MenuItem><MenuItem>Settings</MenuItem>
        </MenuBar>
        <ToolBar $h={39}>
          <Grip $m="0 3px 0 0" /><T n="save" /><Sep /><T n="newLayout" /><T n="dup" /><T n="manager" /><T n="folder" /><T n="saveAs" /><Sep $l={4} />
          <T n="newPage" /><Sep $r={2} /><T n="print" /><T n="image" /><T n="svg" /><T n="pdf" /><T n="undo" /><T n="redo" off />
          <Grip $m="0 3px 0 8px" /><T n="world" off /><T n="first" off /><T n="prev" off />
          <AtlasBox><AtlasValue>1</AtlasValue><AtlasArrow><Arrow c="#a9abad" /></AtlasArrow></AtlasBox>
          <T n="next" off /><T n="last" off /><T n="print" off /><T n="image" off /><ArrowSlot><Arrow c="#a9abad" /></ArrowSlot><T n="atlasSet" />
        </ToolBar>
        <ToolBar $h={38}>
          <Grip $m="0 2px 0 0" /><T n="zin" /><T n="zout" /><T n="z1" /><T n="zfull" /><T n="refresh" /><Grip $m="0 4px 0 8px" />
          <T n="lock" /><T n="unlock" /><T n="group" /><T n="ungroup" /><T n="raise" /><T n="align" /><T n="dist" /><T n="resize" />
        </ToolBar>
        <Main>
          <SideBar>
            <Grip $across $m="0 0 1px" />
            {side.map((ic, i) => <SideTool key={i} $on={i === 2}>{ic}</SideTool>)}
          </SideBar>
          <Canvas>
            <HRuler />
            <CanvasRow>
              <VRuler />
              <View>
                <FloodMap />
                <Frame>
                  <FrameRow><FrameCell>innundation_scenario</FrameCell><FrameCell $last>lost property value</FrameCell></FrameRow>
                  {rows.map(([a, b]) => <FrameRow key={a}><FrameCell>{a}</FrameCell><FrameCell $last>{b} $million</FrameCell></FrameRow>)}
                </Frame>
                <Overlay width="1447" height="858" viewBox="64 154 1447 858" fill="none" shapeRendering="crispEdges">
                  <rect x="953.500" y="545.500" width="308" height="353" stroke="#3d9bd0" /><rect x="953.500" y="545.500" width="308" height="353" stroke="#6b0030" strokeDasharray="4 2" />
                  {[[953, 545], [1102, 545], [1251, 545], [953, 716], [1251, 716], [953, 888], [1102, 888], [1251, 888]].map(([x, y]) => (
                    <rect key={x + "," + y} x={x + 0.5} y={y + 0.5} width="10" height="10" fill="#fff" stroke="#2f87c4" />
                  ))}
                </Overlay>
              </View>
              <Bar $w={13}><BarEnd><Arrow up /></BarEnd><Track $h={95} /><Thumb /><Track $h={32} /><BarEnd><Arrow /></BarEnd></Bar>
            </CanvasRow>
          </Canvas>
          <Splitter><Grip /></Splitter>
          <Dock>
            <Tabs><Tab $on $w={60}>Items</Tab><Tab $w={105} $join>Undo History</Tab></Tabs>
            <DockTitle $h={21}><span>Items</span><Grow /><DockButtons /></DockTitle>
            <Tree>
              <TreeHead>
                <HeadCell><svg width="16" height="12" viewBox="0 0 16 12" fill="none" stroke="#999"><path d="M1 6Q8-1 15 6Q8 12 1 6Z" fill="#eee" /><circle cx="8" cy="6" r="3" fill="#888" stroke="#666" /><circle cx="8" cy="6" r="1.200" fill="#111" stroke="none" /></svg></HeadCell>
                <HeadCell $p={4}><svg width="13" height="16" viewBox="0 0 13 16"><path d="M3 8V5a3.500 3.500 0 0 1 7 0V8" fill="none" stroke="#8a8a8a" strokeWidth="1.800" /><rect x=".5" y="7.500" width="12" height="8" rx="1" fill="#666" /></svg></HeadCell>
                <HeadCell $last>Item</HeadCell>
              </TreeHead>
              <TreeRow><Check><TickMark /></Check><Check />
                <svg width="14" height="14" viewBox="0 0 14 14"><path d="M.5 .5h13v13H.5z" fill="#eee" stroke="#888" /><path d="M1 1h12v3.500H1z" fill="#999" /><path d="M2 3h4M8 3h4" stroke="#333" strokeWidth="1.500" /><path d="M2 6.500h4M7 6.500h5M2 8.500h4M7 8.500h5M2 10.500h4M7 10.500h5M2 12h4M7 12h5" stroke="#aaa" /></svg>
                <Strong>&lt;Attribute table frame&gt;</Strong></TreeRow>
              <TreeRow><Check><TickMark /></Check><Check />
                <svg width="14" height="14" viewBox="0 0 14 14"><path d="M2.500 1.500h11v11h-11z" fill="#d9d9d9" stroke="#aaa" /><path d="M.5 .5h3v12h-3z" fill="#eee" stroke="#aaa" /></svg>
                <span>Map 2</span></TreeRow>
            </Tree>
            <HandleRow><Grip $across /></HandleRow>
            <Tabs><Tab $w={67}>Layout</Tab><Tab $on $w={120} $join>Item Properties</Tab><Tab $w={67} $join>Guides</Tab></Tabs>
            <DockTitle $h={21}><span>Item Properties</span><Grow /><DockButtons /></DockTitle>
            <Heading><Strong>Attribute table</Strong></Heading>
            <Scroll>
              <Form>
                <Section title="Main Properties" mt={9} />
                <Group $pt={10} $h={145}>
                  <Line><Label $w={48}>Source</Label><Combo>Layer Features<Grow /><Arrow /></Combo></Line>
                  <Line $mt={6}><Label $w={48}>Layer</Label><Combo $w={248}>
                    <svg width="17" height="14" viewBox="0 0 17 14"><path d="M1 2q4-2 7 1q4-2 8-2v9q-4-1-6 0q-2-3-5 2H2q-2-5-1-10z" fill="#dedede" stroke="#999" /></svg>
                    results<Grow /><Arrow /></Combo>
                    <OverrideIcon width="25" height="19" viewBox="0 0 25 19" fill="none"><path d="M5.500 1.500h13v16h-13z" fill="#fff" stroke="#777" strokeWidth="1.200" /><path d="M6 4v10L1 9z" fill="#999" stroke="#777" /><path d="M8 5h8" stroke="#444" strokeWidth="2" /><path d="M8 9.500h8M8 13.500h8" stroke="#888" /><path d="M17 13h7l-3.500 4z" fill="#666" /></OverrideIcon>
                  </Line>
                  <Line $mt={6}><Button>Refresh Table Data</Button></Line>
                  <Line $mt={6}><Button>Attributes...</Button></Line>
                </Group>
                <Section title="Feature Filtering" mt={6} />
                <Group $pt={11} $h={204}>
                  <Line $h={25}><Label $w={101}>Maximum rows</Label><Field>30<Grow /><Stepper /></Field></Line>
                  <CheckLine text="Remove duplicate rows from table" mt={10} />
                  <CheckLine text="Show only features visible within a map" mt={12} />
                  <Line $mt={9} $off><Label $w={101}>Linked map</Label><Combo $off><Grow /><Arrow c="#b4b6b8" /></Combo></Line>
                  <CheckLine text="Show only features intersecting atlas feature" mt={9} off />
                  <Line $mt={9}><Label $w={101}><Line $gap={5}><Check />Filter with</Line></Label><Field $h={26} $off /><Small>ε</Small></Line>
                </Group>
                <Section title="Appearance" mt={6} />
                <Group $pt={13} $h={160}>
                  <CheckLine text="Show empty rows" />
                  <Line $h={25} $mt={10}><Label $w={123}>Cell margins</Label><Field>1.00 mm<Grow /><Stepper /></Field></Line>
                  <Line $mt={7}><Label $w={123}>Display header</Label><Combo>On First Frame<Grow /><Arrow /></Combo></Line>
                </Group>
              </Form>
              <Bar $w={15}><BarEnd><Arrow up /></BarEnd><Thumb $h={169} /><Track $h={332} /><BarEnd><Arrow /></BarEnd></Bar>
            </Scroll>
          </Dock>
        </Main>
        <Status>
          <Coord $w={106}>x: 135.956 mm</Coord><Coord $w={106}>y: 209.145 mm</Coord><Coord $w={106}>page: 1</Coord>
          <Zoom><ZoomText>111.7%</ZoomText><ZoomArrow><Arrow /></ZoomArrow></Zoom>
          <Slider width="100" height="14" viewBox="0 0 100 14"><rect x=".5" y="4.500" width="97" height="4" rx="2" fill="#d2d3d4" stroke="#a9abad" /><rect x=".5" y="4.500" width="14" height="4" rx="2" fill="#5fb8ea" stroke="#3a8fc0" /><rect x="10.500" y=".5" width="12" height="12" rx="3" fill="#fcfcfc" stroke="#adb0b2" /></Slider>
        </Status>
        <Pointer width="16" height="24" viewBox="0 0 16 24"><path d="M1.500 1.500V19L5 16L8.500 21.500L11 20.500L9.500 14.500H13.500Z" fill="#4a4a4a" stroke="#fff" strokeWidth="1.200" /></Pointer>
      </Window>
    </>
  );
}
